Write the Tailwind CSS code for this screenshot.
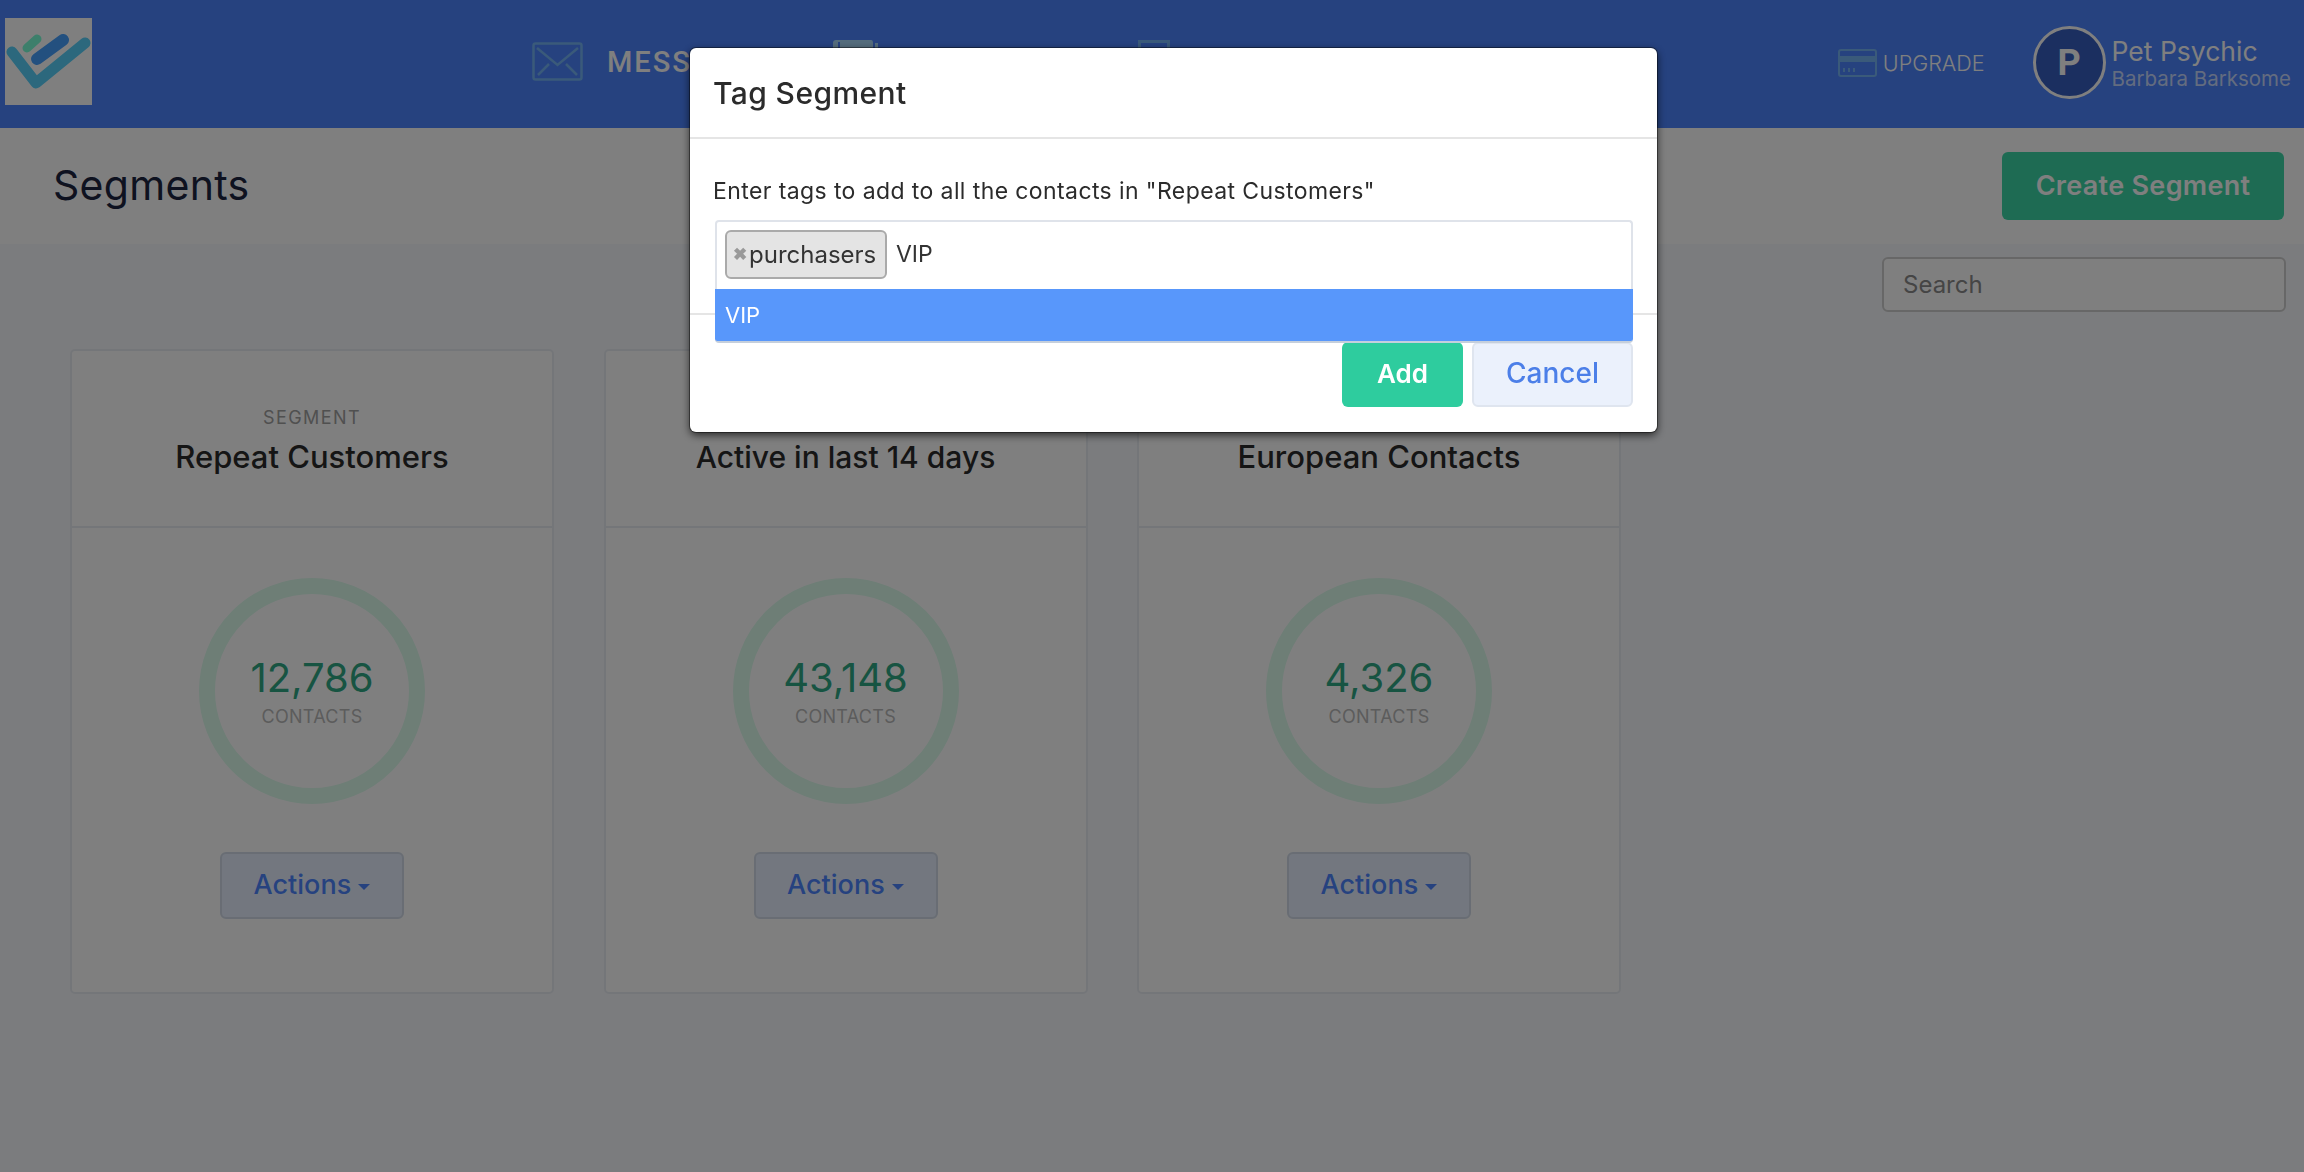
<!DOCTYPE html>
<html lang="en">
<head>
  <meta charset="UTF-8">
  <meta name="viewport" content="width=device-width, initial-scale=1.0">
  <title>Segments</title>
  <script src="https://cdn.jsdelivr.net/npm/@tailwindcss/browser@4"></script>
</head>
<body class="bg-[#f6f8fc] font-['Inter',sans-serif] h-[1172px] overflow-hidden">
  <!-- Navigation Bar -->
  <nav class="h-[128px] bg-[#4c84ff] flex items-center text-white">
    <div class="ml-[5px] mb-[5px] w-[87px] h-[87px] bg-white shrink-0">
      <svg viewBox="0 0 87 87" class="w-full h-full" fill="none" stroke-linecap="round">
        <path d="M7 34 L31 65 L80 25" stroke="#58d0fa" stroke-width="11" stroke-linejoin="round"/>
        <path d="M32 41 L58 22" stroke="#46a0fe" stroke-width="12"/>
        <path d="M22 30 L32 21" stroke="#7affd6" stroke-width="9"/>
      </svg>
    </div>
    <div class="ml-[440px] mb-[5px] w-[301px] flex items-center shrink-0">
      <svg viewBox="0 0 51 39" class="w-[51px] h-[39px]" fill="none" stroke="#74b4f4" stroke-width="2.5">
        <rect x="1.5" y="1.5" width="48" height="36" rx="2"/>
        <path d="M5 6 L25.5 23 L46 6 M6 33 L17 22 M45 33 L34 22"/>
      </svg>
      <span class="ml-[24px] mt-[2px] font-['Roboto',sans-serif] font-medium text-[29px] tracking-[2px]">MESSAGES</span>
    </div>
    <!-- these two sit behind the modal, only the tops show -->
    <div class="mb-[10px] w-[305px] shrink-0">
      <svg viewBox="0 0 46 39" class="w-[46px] h-[39px]">
        <path d="M0 39V3Q0 0 3 0H38Q40 0 40 3V39Z" fill="#a8d8f8"/>
        <rect x="5" y="2" width="2" height="37" fill="#4c84ff"/>
        <rect x="42" y="3" width="3" height="36" fill="#a8d8f8"/>
      </svg>
    </div>
    <div class="mb-[10px] shrink-0">
      <svg viewBox="0 0 32 39" class="w-[32px] h-[39px]" fill="none" stroke="#74b4f4" stroke-width="3">
        <rect x="1.5" y="1.5" width="29" height="36"/>
      </svg>
    </div>
    <div class="ml-auto flex items-center mb-[2px]">
      <svg viewBox="0 0 39 28" class="w-[39px] h-[28px]" fill="none" stroke="#74b4f4" stroke-width="2">
        <rect x="1" y="1" width="37" height="26" rx="2"/>
        <rect x="1" y="7" width="37" height="6" fill="#74b4f4" stroke="none"/>
        <path d="M6 19v4M11 19v4M16 19v4"/>
      </svg>
      <span class="ml-[6px] text-[21.5px] font-light">UPGRADE</span>
    </div>
    <div class="ml-[48px] mb-[3px] w-[73px] h-[73px] rounded-full border-[3px] border-white bg-[#365ec0] flex items-center justify-center font-['Roboto',sans-serif] font-bold text-[36px]">P</div>
    <div class="ml-[6px] mr-[13px] flex flex-col">
      <span class="text-[26.5px] leading-[30px]">Pet Psychic</span>
      <span class="text-[20.5px] leading-[26px] text-white/70">Barbara Barksome</span>
    </div>
  </nav>

  <!-- Page Title -->
  <div class="h-[116px] bg-white flex items-center justify-between pl-[53px] pr-[20px]">
    <h1 class="text-[41px] tracking-[0.3px] text-[#1c2540]">Segments</h1>
    <button class="w-[282px] h-[68px] rounded-[6px] bg-[#3cd6a6] text-white font-semibold text-[27px] tracking-[0.3px]">Create Segment</button>
  </div>

  <!-- Search -->
  <div class="flex justify-end pt-[13px] pr-[18px]">
    <div class="w-[404px] h-[55px] bg-white border-2 border-[#cfcfcf] rounded-[6px] flex items-center pl-[19px] text-[24px] text-[#8a8a8a]">Search</div>
  </div>

  <!-- Segment Cards -->
  <div class="mt-[37px] ml-[70px] flex gap-[49.5px]">
    <div class="w-[484px] h-[645px] bg-white border-2 border-[#e9edf3] rounded-[5px] flex flex-col items-center">
      <div class="w-full h-[177px] border-b-2 border-[#e9edf3] flex flex-col items-center pt-[55px]">
        <div class="text-[18px] leading-[24px] tracking-[1.4px] text-[#a0a0a0]">SEGMENT</div>
        <div class="mt-[7px] text-[31px] leading-[40px] font-medium text-[#2b2b2b]">Repeat Customers</div>
      </div>
      <div class="mt-[50px] w-[226px] h-[226px] rounded-full border-[16px] border-[#dcfced] flex flex-col items-center justify-center">
        <div class="text-[40px] leading-[48px] text-[#2fa884]">12,786</div>
        <div class="mt-[4px] text-[18px] leading-[22px] tracking-[0.3px] text-[#b8b8b8]">CONTACTS</div>
      </div>
      <button class="mt-[48px] w-[184px] h-[67px] bg-[#e6effe] border-2 border-[#d2dbe8] rounded-[6px] text-[#4c84ff] font-medium text-[27px]">Actions <span class="inline-block align-middle w-0 h-0 border-x-[6px] border-x-transparent border-t-[6px] border-t-[#4c84ff]"></span></button>
    </div>
    <div class="w-[484px] h-[645px] bg-white border-2 border-[#e9edf3] rounded-[5px] flex flex-col items-center">
      <div class="w-full h-[177px] border-b-2 border-[#e9edf3] flex flex-col items-center pt-[55px]">
        <div class="text-[18px] leading-[24px] tracking-[1.4px] text-[#a0a0a0]">SEGMENT</div>
        <div class="mt-[7px] text-[30px] leading-[40px] font-medium text-[#2b2b2b]">Active in last 14 days</div>
      </div>
      <div class="mt-[50px] w-[226px] h-[226px] rounded-full border-[16px] border-[#dcfced] flex flex-col items-center justify-center">
        <div class="text-[40px] leading-[48px] text-[#2fa884]">43,148</div>
        <div class="mt-[4px] text-[18px] leading-[22px] tracking-[0.3px] text-[#b8b8b8]">CONTACTS</div>
      </div>
      <button class="mt-[48px] w-[184px] h-[67px] bg-[#e6effe] border-2 border-[#d2dbe8] rounded-[6px] text-[#4c84ff] font-medium text-[27px]">Actions <span class="inline-block align-middle w-0 h-0 border-x-[6px] border-x-transparent border-t-[6px] border-t-[#4c84ff]"></span></button>
    </div>
    <div class="w-[484px] h-[645px] bg-white border-2 border-[#e9edf3] rounded-[5px] flex flex-col items-center">
      <div class="w-full h-[177px] border-b-2 border-[#e9edf3] flex flex-col items-center pt-[55px]">
        <div class="text-[18px] leading-[24px] tracking-[1.4px] text-[#a0a0a0]">SEGMENT</div>
        <div class="mt-[7px] text-[31px] leading-[40px] font-medium text-[#2b2b2b]">European Contacts</div>
      </div>
      <div class="mt-[50px] w-[226px] h-[226px] rounded-full border-[16px] border-[#dcfced] flex flex-col items-center justify-center">
        <div class="text-[40px] leading-[48px] text-[#2fa884]">4,326</div>
        <div class="mt-[4px] text-[18px] leading-[22px] tracking-[0.3px] text-[#b8b8b8]">CONTACTS</div>
      </div>
      <button class="mt-[48px] w-[184px] h-[67px] bg-[#e6effe] border-2 border-[#d2dbe8] rounded-[6px] text-[#4c84ff] font-medium text-[27px]">Actions <span class="inline-block align-middle w-0 h-0 border-x-[6px] border-x-transparent border-t-[6px] border-t-[#4c84ff]"></span></button>
    </div>
  </div>

  <!-- Modal Backdrop -->
  <div class="fixed inset-0 bg-black/50"></div>

  <!-- Tag Segment Modal -->
  <div class="fixed left-[690px] top-[48px] w-[967px] h-[384px] bg-white rounded-[6px] shadow-[0_3px_9px_rgba(0,0,0,0.7),0_0_0_1px_rgba(0,0,0,0.4)]">
    <div class="h-[91px] pt-[1px] border-b-2 border-[#e5e5e5] flex items-center pl-[23px] text-[30px] tracking-[0.4px] font-medium text-[#2b2b2b]">Tag Segment</div>
    <div class="relative h-[176px] border-b-2 border-[#e5e5e5] pl-[25px] pr-[24px] pt-[36px]">
      <p class="-ml-[2px] text-[23px] leading-[32px] tracking-[0.4px] text-[#2b2b2b]">Enter tags to add to all the contacts in "Repeat Customers"</p>
      <div class="mt-[13px] h-[69px] border-2 border-b-0 border-[#dfe3ea] rounded-t-[4px] flex items-center pl-[8px]">
        <div class="w-[162px] h-[49px] mb-[2px] bg-[#e4e4e4] border-2 border-[#aaaaaa] rounded-[6px] flex items-center pl-[6px] text-[24px] text-[#333333]">
          <span class="text-[#999999] font-bold text-[17px] mr-[2px]">&#10006;</span>purchasers
        </div>
        <span class="ml-[9px] mb-[2px] text-[23px] text-[#333333]">VIP</span>
      </div>
      <div class="relative z-10 h-[54px] bg-[#5897fb] border-b-2 border-[#c5cfdc] rounded-b-[4px] flex items-center pl-[10px] text-[22px] text-white">VIP</div>
    </div>
    <div class="flex justify-end gap-[9px] pr-[24px] pt-[27px]">
      <button class="w-[121px] h-[65px] pb-[2px] bg-[#2ecc9e] rounded-[6px] text-white font-semibold text-[26px]">Add</button>
      <button class="w-[161px] h-[65px] pb-[3px] bg-[#ebf1fc] border-2 border-[#dfe5ef] rounded-[6px] text-[#4c7fe8] font-medium text-[28px]">Cancel</button>
    </div>
  </div>
</body>
</html>
